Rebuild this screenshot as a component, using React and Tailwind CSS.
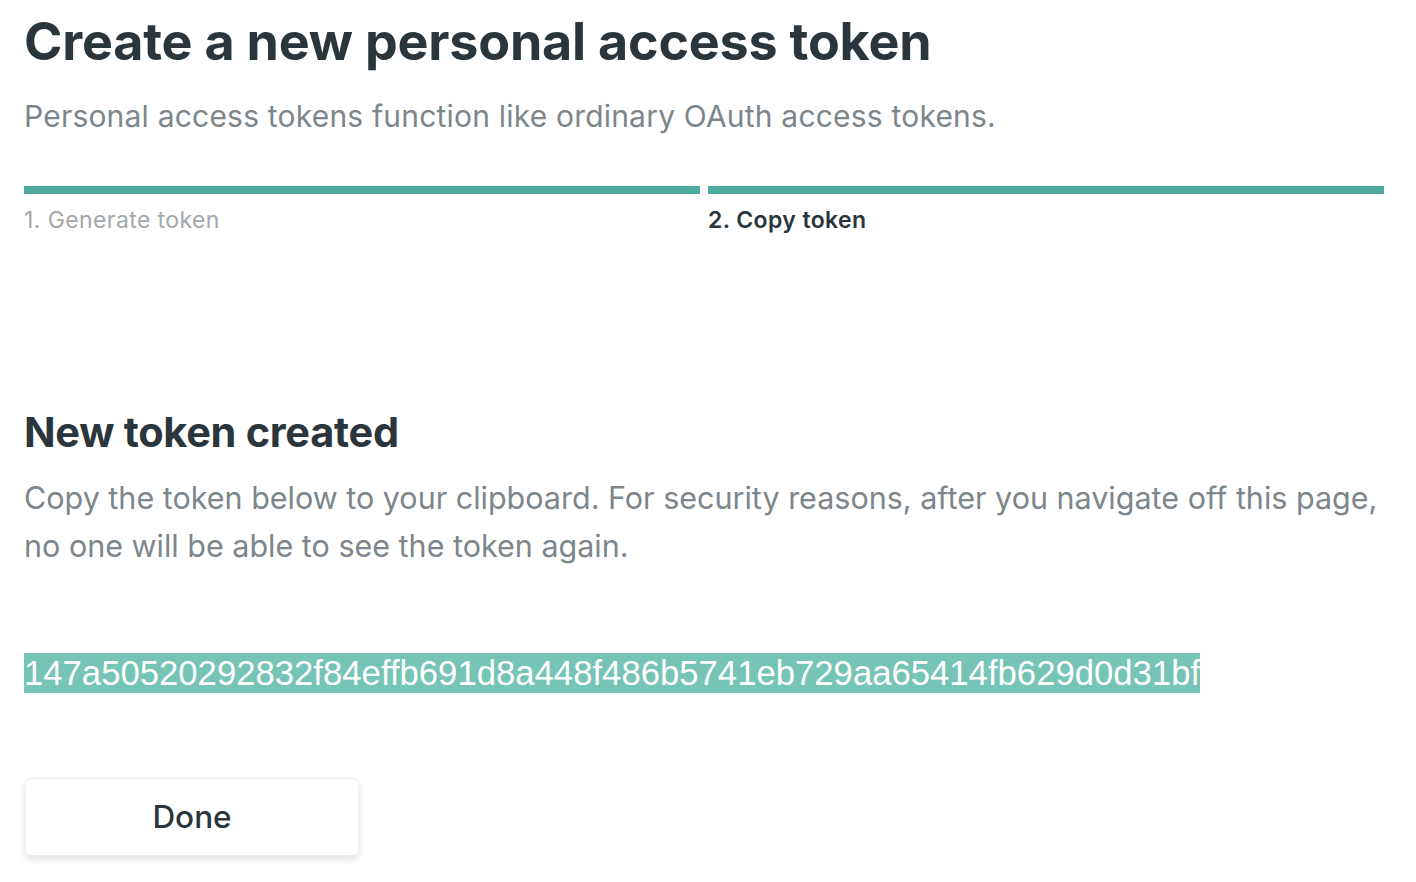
import React from "react";

const token = "147a50520292832f84effb691d8a448f486b5741eb729aa65414fb629d0d31bf";

const steps = [
  { label: "1. Generate token", active: false },
  { label: "2. Copy token", active: true },
];

export default function App() {
  return (
    <div className="min-h-screen bg-white px-6 font-['Inter',sans-serif] text-[#2b363c]">
      <h1 className="pt-[10px] text-[52px] font-bold leading-[64px] tracking-[-0.2px]">
        Create a new personal access token
      </h1>
      <p className="mt-[22px] text-[30px] leading-[40px] tracking-[0.2px] text-[#7d868b]">
        Personal access tokens function like ordinary OAuth access tokens.
      </p>

      {/* steps */}
      <div className="mt-[50px] flex w-[1360px] gap-2">
        {steps.map((s) => (
          <div key={s.label} className="flex-1">
            <div className="h-[8px] bg-[#4eab9e]" />
            <div
              className={`mt-[12px] text-[23px] leading-[28px] tracking-[0.4px] ${
                s.active ? "font-semibold text-[#2b363c]" : "text-[#a3a8ab]"
              }`}
            >
              {s.label}
            </div>
          </div>
        ))}
      </div>

      <h2 className="mt-[172px] text-[41.5px] font-bold leading-[52px] tracking-[-0.3px]">New token created</h2>
      <p className="mt-[16px] w-[1370px] text-[30.5px] leading-[48px] text-[#7d868b]">
        Copy the token below to your clipboard. For security reasons, after you navigate off this page, no one will
        be able to see the token again.
      </p>

      <div className="mt-[85px]">
        <span className="bg-[#76c4b5] py-px font-['Liberation_Sans',sans-serif] text-[34.7px] leading-[36px] text-white">
          {token}
        </span>
      </div>

      <button className="mt-[87px] ml-px flex h-[78px] w-[334px] items-center justify-center rounded-md border border-[#ebeced] bg-white text-[31.5px] font-medium text-[#2b363c] shadow-[0_3px_7px_rgba(0,0,0,0.12)]">
        Done
      </button>
    </div>
  );
}
